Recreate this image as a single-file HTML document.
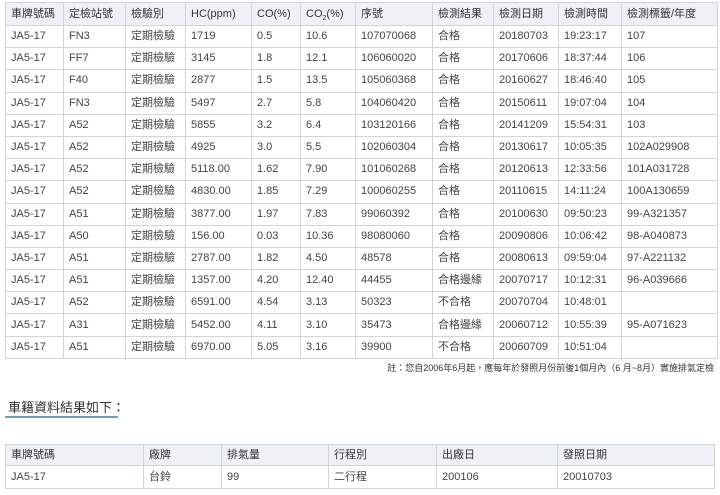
<!DOCTYPE html>
<html><head><meta charset="utf-8"><style>
body{margin:0;background:#fff;font-family:"Liberation Sans","Noto Sans CJK TC",sans-serif;font-size:11px;color:#444;}
table{border-collapse:collapse;position:absolute;table-layout:fixed;}
td,th{border:1px solid #cdd6df;padding:0 0 0 5px;text-align:left;font-weight:normal;white-space:nowrap;overflow:hidden;line-height:13px;vertical-align:middle;}
th{background:#eef2f6;color:#333;}
#t1{left:5px;top:2px;width:712px;}
#t1 th{height:22px;}
#t1 td{height:21.2px;}
#t2{left:5px;top:444px;width:709px;}
#t2 th{height:20px;}
#t2 td{height:22px;}
.note{position:absolute;top:362px;right:6px;font-size:9px;color:#333;white-space:nowrap;line-height:12px;}
.h{position:absolute;left:8px;top:401px;font-size:13px;color:#333;white-space:nowrap;line-height:14px;}
.u{position:absolute;left:5px;top:416px;width:113px;height:2px;background:#6a9fb5;}
</style></head><body>
<table id="t1">
<colgroup><col style="width:58px"><col style="width:62px"><col style="width:60px"><col style="width:66px"><col style="width:49px"><col style="width:55px"><col style="width:77px"><col style="width:61px"><col style="width:65px"><col style="width:63px"><col style="width:96px"></colgroup>
<tr><th>車牌號碼</th><th>定檢站號</th><th>檢驗別</th><th>HC(ppm)</th><th>CO(%)</th><th>CO<sub style="font-size:7px;line-height:0">2</sub>(%)</th><th>序號</th><th>檢測結果</th><th>檢測日期</th><th>檢測時間</th><th>檢測標籤/年度</th></tr>
<tr><td>JA5-17</td><td>FN3</td><td>定期檢驗</td><td>1719</td><td>0.5</td><td>10.6</td><td>107070068</td><td>合格</td><td>20180703</td><td>19:23:17</td><td>107</td></tr>
<tr><td>JA5-17</td><td>FF7</td><td>定期檢驗</td><td>3145</td><td>1.8</td><td>12.1</td><td>106060020</td><td>合格</td><td>20170606</td><td>18:37:44</td><td>106</td></tr>
<tr><td>JA5-17</td><td>F40</td><td>定期檢驗</td><td>2877</td><td>1.5</td><td>13.5</td><td>105060368</td><td>合格</td><td>20160627</td><td>18:46:40</td><td>105</td></tr>
<tr><td>JA5-17</td><td>FN3</td><td>定期檢驗</td><td>5497</td><td>2.7</td><td>5.8</td><td>104060420</td><td>合格</td><td>20150611</td><td>19:07:04</td><td>104</td></tr>
<tr><td>JA5-17</td><td>A52</td><td>定期檢驗</td><td>5855</td><td>3.2</td><td>6.4</td><td>103120166</td><td>合格</td><td>20141209</td><td>15:54:31</td><td>103</td></tr>
<tr><td>JA5-17</td><td>A52</td><td>定期檢驗</td><td>4925</td><td>3.0</td><td>5.5</td><td>102060304</td><td>合格</td><td>20130617</td><td>10:05:35</td><td>102A029908</td></tr>
<tr><td>JA5-17</td><td>A52</td><td>定期檢驗</td><td>5118.00</td><td>1.62</td><td>7.90</td><td>101060268</td><td>合格</td><td>20120613</td><td>12:33:56</td><td>101A031728</td></tr>
<tr><td>JA5-17</td><td>A52</td><td>定期檢驗</td><td>4830.00</td><td>1.85</td><td>7.29</td><td>100060255</td><td>合格</td><td>20110615</td><td>14:11:24</td><td>100A130659</td></tr>
<tr><td>JA5-17</td><td>A51</td><td>定期檢驗</td><td>3877.00</td><td>1.97</td><td>7.83</td><td>99060392</td><td>合格</td><td>20100630</td><td>09:50:23</td><td>99-A321357</td></tr>
<tr><td>JA5-17</td><td>A50</td><td>定期檢驗</td><td>156.00</td><td>0.03</td><td>10.36</td><td>98080060</td><td>合格</td><td>20090806</td><td>10:06:42</td><td>98-A040873</td></tr>
<tr><td>JA5-17</td><td>A51</td><td>定期檢驗</td><td>2787.00</td><td>1.82</td><td>4.50</td><td>48578</td><td>合格</td><td>20080613</td><td>09:59:04</td><td>97-A221132</td></tr>
<tr><td>JA5-17</td><td>A51</td><td>定期檢驗</td><td>1357.00</td><td>4.20</td><td>12.40</td><td>44455</td><td>合格邊緣</td><td>20070717</td><td>10:12:31</td><td>96-A039666</td></tr>
<tr><td>JA5-17</td><td>A52</td><td>定期檢驗</td><td>6591.00</td><td>4.54</td><td>3.13</td><td>50323</td><td>不合格</td><td>20070704</td><td>10:48:01</td><td></td></tr>
<tr><td>JA5-17</td><td>A31</td><td>定期檢驗</td><td>5452.00</td><td>4.11</td><td>3.10</td><td>35473</td><td>合格邊緣</td><td>20060712</td><td>10:55:39</td><td>95-A071623</td></tr>
<tr><td>JA5-17</td><td>A51</td><td>定期檢驗</td><td>6970.00</td><td>5.05</td><td>3.16</td><td>39900</td><td>不合格</td><td>20060709</td><td>10:51:04</td><td></td></tr>
</table>
<div class="note">註：您自2006年6月起，應每年於發照月份前後1個月內（6 月~8月）實施排氣定檢</div>
<div class="h">車籍資料結果如下：</div>
<div class="u"></div>
<table id="t2">
<colgroup><col style="width:138px"><col style="width:78px"><col style="width:107px"><col style="width:108px"><col style="width:121px"><col style="width:157px"></colgroup>
<tr><th>車牌號碼</th><th>廠牌</th><th>排氣量</th><th>行程別</th><th>出廠日</th><th>發照日期</th></tr>
<tr><td>JA5-17</td><td>台鈴</td><td>99</td><td>二行程</td><td>200106</td><td>20010703</td></tr>
</table>
</body></html>
